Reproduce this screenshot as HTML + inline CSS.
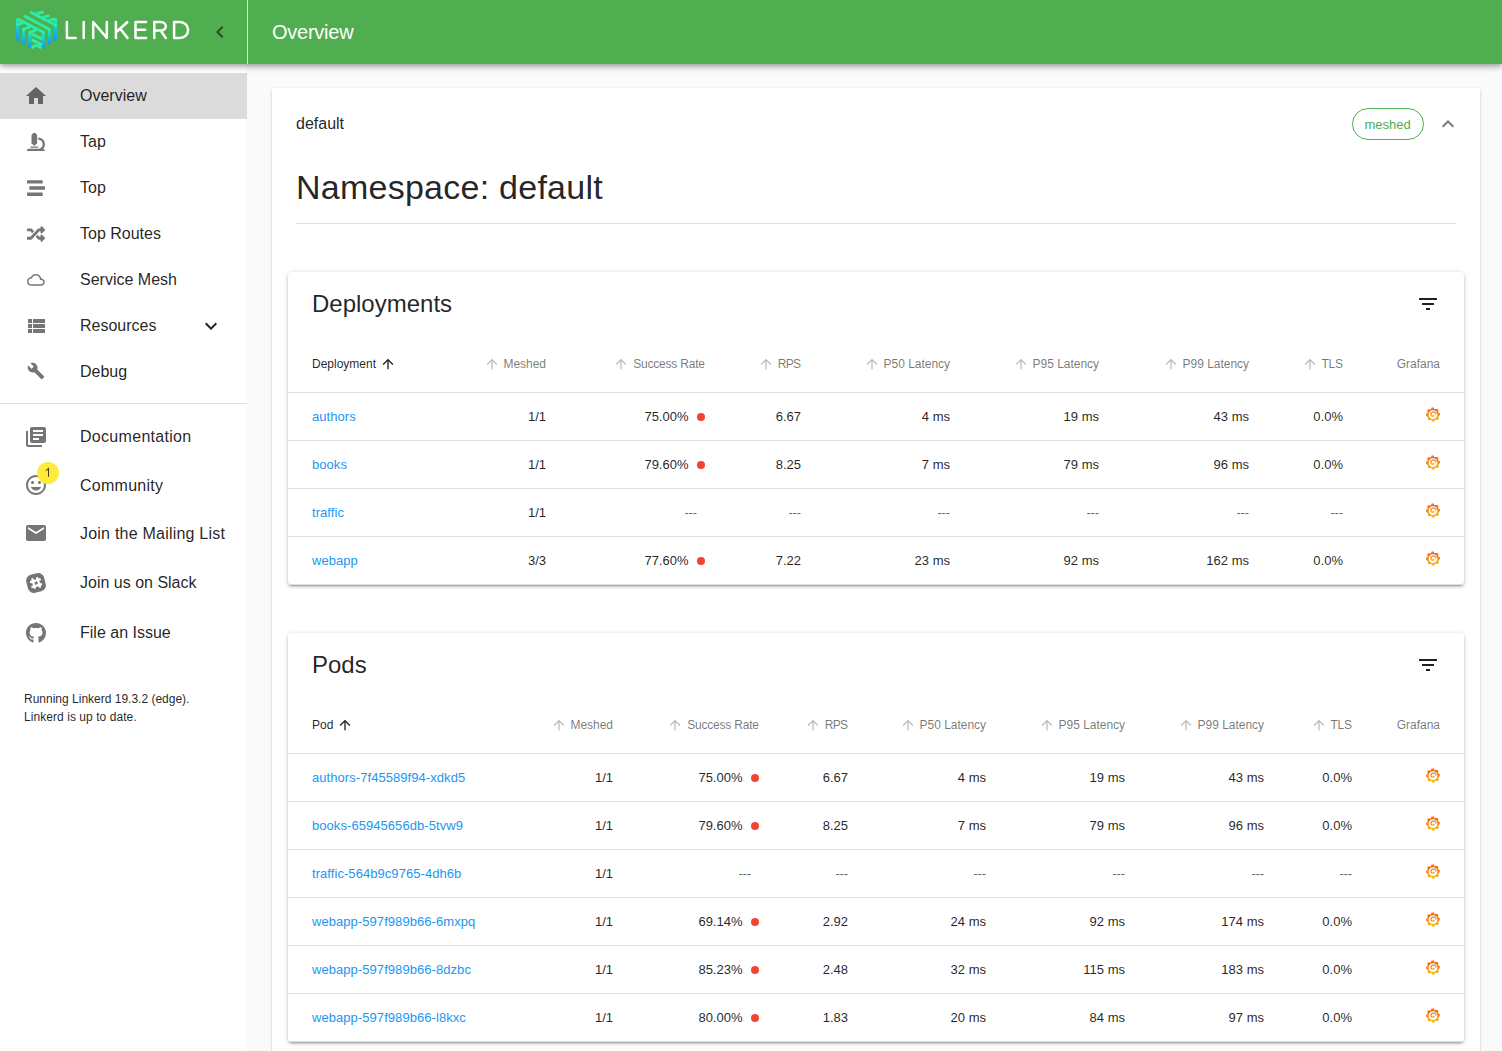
<!DOCTYPE html>
<html><head><meta charset="utf-8"><title>Linkerd</title>
<style>
html,body{margin:0;padding:0;}
body{width:1502px;height:1051px;overflow:hidden;position:relative;background:#fafafa;font-family:"Liberation Sans", sans-serif;}
.t{position:absolute;white-space:nowrap;}
svg{display:block;}
</style></head><body>

<div style="position:absolute;left:272px;top:88px;width:1208px;height:1100px;background:#fff;border-radius:2px;box-shadow:0px 1px 3px 0px rgba(0,0,0,0.2),0px 1px 1px 0px rgba(0,0,0,0.14),0px 2px 1px -1px rgba(0,0,0,0.12);"></div>
<div class="t" style="left:296px;top:116.46px;font-size:16px;line-height:16px;color:rgba(0,0,0,0.87);">default</div>
<div style="position:absolute;left:1352px;top:108px;width:72px;height:32px;box-sizing:border-box;border:1px solid #50ad50;border-radius:16px;"></div>
<div class="t" style="left:1364.5px;top:118.00px;font-size:13px;line-height:13px;color:#50ad50;">meshed</div>
<svg style="position:absolute;left:1436px;top:112px;" width="24" height="24" viewBox="0 0 24 24"><path fill="rgba(0,0,0,0.54)" d="M12 8l-6 6 1.41 1.41L12 10.83l4.59 4.58L18 14z"/></svg>
<div class="t" style="left:296px;top:170.02px;font-size:34px;line-height:34px;color:rgba(0,0,0,0.87);letter-spacing:0.25px;">Namespace: default</div>
<div style="position:absolute;left:296px;top:223px;width:1160px;height:1px;background:rgba(0,0,0,0.12);"></div>
<div style="position:absolute;left:288px;top:272px;width:1176px;height:313px;background:#fff;border-radius:4px;box-shadow:0px 1px 5px 0px rgba(0,0,0,0.2),0px 2px 2px 0px rgba(0,0,0,0.14),0px 3px 1px -2px rgba(0,0,0,0.12);"></div>
<div class="t" style="left:312px;top:291.68px;font-size:24px;line-height:24px;color:rgba(0,0,0,0.87);">Deployments</div>
<svg style="position:absolute;left:1416px;top:292px;" width="24" height="24" viewBox="0 0 24 24"><path fill="rgba(0,0,0,0.87)" d="M10 18h4v-2h-4v2zM3 6v2h18V6H3zm3 7h12v-2H6v2z"/></svg>
<div class="t" style="left:312px;top:357.84px;font-size:12px;line-height:12px;color:rgba(0,0,0,0.87);">Deployment</div>
<svg style="position:absolute;left:379.5px;top:356px;" width="16" height="16" viewBox="0 0 24 24"><path fill="rgba(0,0,0,0.87)" d="M4 12l1.41 1.41L11 7.83V20h2V7.83l5.58 5.59L20 12l-8-8-8 8z"/></svg>
<div class="t" style="right:956.0317708333333px;top:357.84px;font-size:12px;line-height:12px;color:rgba(0,0,0,0.54);text-align:right;letter-spacing:-0.032px;">Meshed</div>
<svg style="position:absolute;left:483.5px;top:356px;" width="16" height="16" viewBox="0 0 24 24"><path fill="rgba(0,0,0,0.26)" d="M4 12l1.41 1.41L11 7.83V20h2V7.83l5.58 5.59L20 12l-8-8-8 8z"/></svg>
<div class="t" style="right:797.202734375px;top:357.84px;font-size:12px;line-height:12px;color:rgba(0,0,0,0.54);text-align:right;letter-spacing:-0.203px;">Success Rate</div>
<svg style="position:absolute;left:613.4px;top:356px;" width="16" height="16" viewBox="0 0 24 24"><path fill="rgba(0,0,0,0.26)" d="M4 12l1.41 1.41L11 7.83V20h2V7.83l5.58 5.59L20 12l-8-8-8 8z"/></svg>
<div class="t" style="right:701.6583333333333px;top:357.84px;font-size:12px;line-height:12px;color:rgba(0,0,0,0.54);text-align:right;letter-spacing:-0.658px;">RPS</div>
<svg style="position:absolute;left:758.3px;top:356px;" width="16" height="16" viewBox="0 0 24 24"><path fill="rgba(0,0,0,0.26)" d="M4 12l1.41 1.41L11 7.83V20h2V7.83l5.58 5.59L20 12l-8-8-8 8z"/></svg>
<div class="t" style="right:552.0285511363636px;top:357.84px;font-size:12px;line-height:12px;color:rgba(0,0,0,0.54);text-align:right;letter-spacing:-0.029px;">P50 Latency</div>
<svg style="position:absolute;left:863.6px;top:356px;" width="16" height="16" viewBox="0 0 24 24"><path fill="rgba(0,0,0,0.26)" d="M4 12l1.41 1.41L11 7.83V20h2V7.83l5.58 5.59L20 12l-8-8-8 8z"/></svg>
<div class="t" style="right:403.0285511363636px;top:357.84px;font-size:12px;line-height:12px;color:rgba(0,0,0,0.54);text-align:right;letter-spacing:-0.029px;">P95 Latency</div>
<svg style="position:absolute;left:1012.5999999999999px;top:356px;" width="16" height="16" viewBox="0 0 24 24"><path fill="rgba(0,0,0,0.26)" d="M4 12l1.41 1.41L11 7.83V20h2V7.83l5.58 5.59L20 12l-8-8-8 8z"/></svg>
<div class="t" style="right:253.0285511363636px;top:357.84px;font-size:12px;line-height:12px;color:rgba(0,0,0,0.54);text-align:right;letter-spacing:-0.029px;">P99 Latency</div>
<svg style="position:absolute;left:1162.6px;top:356px;" width="16" height="16" viewBox="0 0 24 24"><path fill="rgba(0,0,0,0.26)" d="M4 12l1.41 1.41L11 7.83V20h2V7.83l5.58 5.59L20 12l-8-8-8 8z"/></svg>
<div class="t" style="right:159.2359375000001px;top:357.84px;font-size:12px;line-height:12px;color:rgba(0,0,0,0.54);text-align:right;letter-spacing:-0.236px;">TLS</div>
<svg style="position:absolute;left:1301.7px;top:356px;" width="16" height="16" viewBox="0 0 24 24"><path fill="rgba(0,0,0,0.26)" d="M4 12l1.41 1.41L11 7.83V20h2V7.83l5.58 5.59L20 12l-8-8-8 8z"/></svg>
<div class="t" style="right:61.99991071428576px;top:357.84px;font-size:12px;line-height:12px;color:rgba(0,0,0,0.54);text-align:right;letter-spacing:0.000px;">Grafana</div>
<div style="position:absolute;left:288px;top:392px;width:1176px;height:1px;background:#e0e0e0;"></div>
<div class="t" style="left:312px;top:410.00px;font-size:13px;line-height:13px;color:#2196f3;letter-spacing:0.06px;">authors</div>
<div class="t" style="right:956px;top:410.00px;font-size:13px;line-height:13px;color:rgba(0,0,0,0.87);text-align:right;">1/1</div>
<div class="t" style="right:813.5px;top:410.00px;font-size:13px;line-height:13px;color:rgba(0,0,0,0.87);text-align:right;">75.00%</div>
<div style="position:absolute;left:697px;top:413px;width:8px;height:8px;border-radius:50%;background:#f44336;"></div>
<div class="t" style="right:701px;top:410.00px;font-size:13px;line-height:13px;color:rgba(0,0,0,0.87);text-align:right;">6.67</div>
<div class="t" style="right:552px;top:410.00px;font-size:13px;line-height:13px;color:rgba(0,0,0,0.87);text-align:right;">4 ms</div>
<div class="t" style="right:403px;top:410.00px;font-size:13px;line-height:13px;color:rgba(0,0,0,0.87);text-align:right;">19 ms</div>
<div class="t" style="right:253px;top:410.00px;font-size:13px;line-height:13px;color:rgba(0,0,0,0.87);text-align:right;">43 ms</div>
<div class="t" style="right:159px;top:410.00px;font-size:13px;line-height:13px;color:rgba(0,0,0,0.87);text-align:right;">0.0%</div>
<svg style="position:absolute;left:1426px;top:407px;" width="14" height="16" viewBox="0 0 14 16"><defs><linearGradient id="gg1" x1="0" y1="0" x2="0" y2="16" gradientUnits="userSpaceOnUse"><stop offset="0" stop-color="#f05a28"/><stop offset="1" stop-color="#fbca0a"/></linearGradient></defs>
<path fill="url(#gg1)" fill-rule="evenodd" d="M14.1 7.6 L14.1 7.9 L14.1 8.2 L13.7 8.4 L13.2 8.6 L12.8 8.8 L12.7 9.0 L12.7 9.2 L12.6 9.4 L12.5 9.6 L12.5 9.9 L12.4 10.1 L12.3 10.3 L12.5 10.7 L12.7 11.1 L12.9 11.5 L12.7 11.8 L12.6 12.0 L12.4 12.2 L12.2 12.4 L12.0 12.6 L11.8 12.8 L11.6 13.0 L11.1 12.9 L10.7 12.7 L10.3 12.5 L10.1 12.6 L9.9 12.7 L9.7 12.9 L9.5 13.0 L9.3 13.1 L9.0 13.1 L8.8 13.2 L8.7 13.7 L8.6 14.1 L8.4 14.6 L8.1 14.6 L7.8 14.7 L7.6 14.7 L7.3 14.7 L7.0 14.7 L6.7 14.7 L6.4 14.7 L6.2 14.3 L6.0 13.8 L5.8 13.4 L5.6 13.3 L5.4 13.3 L5.2 13.2 L5.0 13.1 L4.7 13.1 L4.5 13.0 L4.3 12.9 L3.9 13.1 L3.5 13.3 L3.1 13.5 L2.8 13.3 L2.6 13.2 L2.4 13.0 L2.2 12.8 L2.0 12.6 L1.8 12.4 L1.6 12.2 L1.7 11.7 L1.9 11.3 L2.1 10.9 L2.0 10.7 L1.9 10.5 L1.7 10.3 L1.6 10.1 L1.5 9.9 L1.5 9.6 L1.4 9.4 L0.9 9.3 L0.5 9.2 L0.0 9.0 L-0.0 8.7 L-0.1 8.4 L-0.1 8.2 L-0.1 7.9 L-0.1 7.6 L-0.1 7.3 L-0.1 7.0 L0.3 6.8 L0.8 6.6 L1.2 6.4 L1.3 6.2 L1.3 6.0 L1.4 5.8 L1.5 5.6 L1.5 5.3 L1.6 5.1 L1.7 4.9 L1.5 4.5 L1.3 4.1 L1.1 3.7 L1.3 3.4 L1.4 3.2 L1.6 3.0 L1.8 2.8 L2.0 2.6 L2.2 2.4 L2.4 2.2 L2.9 2.3 L3.3 2.5 L3.7 2.7 L3.9 2.6 L4.1 2.5 L4.3 2.3 L4.5 2.2 L4.7 2.1 L5.0 2.1 L5.2 2.0 L5.3 1.5 L5.4 1.1 L5.6 0.6 L5.9 0.6 L6.2 0.5 L6.4 0.5 L6.7 0.5 L7.0 0.5 L7.3 0.5 L7.6 0.5 L7.8 0.9 L8.0 1.4 L8.2 1.8 L8.4 1.9 L8.6 1.9 L8.8 2.0 L9.0 2.1 L9.3 2.1 L9.5 2.2 L9.7 2.3 L10.1 2.1 L10.5 1.9 L10.9 1.7 L11.2 1.9 L11.4 2.0 L11.6 2.2 L11.8 2.4 L12.0 2.6 L12.2 2.8 L12.4 3.0 L12.3 3.5 L12.1 3.9 L11.9 4.3 L12.0 4.5 L12.1 4.7 L12.3 4.9 L12.4 5.1 L12.5 5.3 L12.5 5.6 L12.6 5.8 L13.1 5.9 L13.5 6.0 L14.0 6.2 L14.0 6.5 L14.1 6.8 L14.1 7.0 L14.1 7.3Z M11.3 7.6 A4.3 4.3 0 1 0 2.7 7.6 A4.3 4.3 0 1 0 11.3 7.6Z"/><path fill="none" stroke="url(#gg1)" stroke-width="1.25" stroke-linecap="round" d="M9.97 7.15 L9.84 6.77 L9.67 6.42 L9.45 6.10 L9.19 5.81 L8.91 5.57 L8.59 5.37 L8.26 5.21 L7.92 5.10 L7.57 5.05 L7.22 5.03 L6.88 5.07 L6.55 5.15 L6.24 5.27 L5.96 5.43 L5.70 5.63 L5.48 5.85 L5.29 6.10 L5.14 6.36 L5.03 6.64 L4.96 6.92 L4.93 7.21 L4.94 7.49 L4.98 7.76 L5.06 8.02 L5.18 8.26 L5.32 8.47 L5.49 8.67 L5.67 8.83 L5.87 8.96 L6.09 9.06 L6.31 9.13 L6.53 9.17 L6.75 9.18 L6.96 9.15 L7.17 9.10 L7.36 9.03 L7.53 8.93 L7.68 8.81 L7.81 8.67 L7.91 8.53"/></svg>
<div style="position:absolute;left:288px;top:440px;width:1176px;height:1px;background:#e0e0e0;"></div>
<div class="t" style="left:312px;top:458.00px;font-size:13px;line-height:13px;color:#2196f3;letter-spacing:0.06px;">books</div>
<div class="t" style="right:956px;top:458.00px;font-size:13px;line-height:13px;color:rgba(0,0,0,0.87);text-align:right;">1/1</div>
<div class="t" style="right:813.5px;top:458.00px;font-size:13px;line-height:13px;color:rgba(0,0,0,0.87);text-align:right;">79.60%</div>
<div style="position:absolute;left:697px;top:461px;width:8px;height:8px;border-radius:50%;background:#f44336;"></div>
<div class="t" style="right:701px;top:458.00px;font-size:13px;line-height:13px;color:rgba(0,0,0,0.87);text-align:right;">8.25</div>
<div class="t" style="right:552px;top:458.00px;font-size:13px;line-height:13px;color:rgba(0,0,0,0.87);text-align:right;">7 ms</div>
<div class="t" style="right:403px;top:458.00px;font-size:13px;line-height:13px;color:rgba(0,0,0,0.87);text-align:right;">79 ms</div>
<div class="t" style="right:253px;top:458.00px;font-size:13px;line-height:13px;color:rgba(0,0,0,0.87);text-align:right;">96 ms</div>
<div class="t" style="right:159px;top:458.00px;font-size:13px;line-height:13px;color:rgba(0,0,0,0.87);text-align:right;">0.0%</div>
<svg style="position:absolute;left:1426px;top:455px;" width="14" height="16" viewBox="0 0 14 16"><defs><linearGradient id="gg2" x1="0" y1="0" x2="0" y2="16" gradientUnits="userSpaceOnUse"><stop offset="0" stop-color="#f05a28"/><stop offset="1" stop-color="#fbca0a"/></linearGradient></defs>
<path fill="url(#gg2)" fill-rule="evenodd" d="M14.1 7.6 L14.1 7.9 L14.1 8.2 L13.7 8.4 L13.2 8.6 L12.8 8.8 L12.7 9.0 L12.7 9.2 L12.6 9.4 L12.5 9.6 L12.5 9.9 L12.4 10.1 L12.3 10.3 L12.5 10.7 L12.7 11.1 L12.9 11.5 L12.7 11.8 L12.6 12.0 L12.4 12.2 L12.2 12.4 L12.0 12.6 L11.8 12.8 L11.6 13.0 L11.1 12.9 L10.7 12.7 L10.3 12.5 L10.1 12.6 L9.9 12.7 L9.7 12.9 L9.5 13.0 L9.3 13.1 L9.0 13.1 L8.8 13.2 L8.7 13.7 L8.6 14.1 L8.4 14.6 L8.1 14.6 L7.8 14.7 L7.6 14.7 L7.3 14.7 L7.0 14.7 L6.7 14.7 L6.4 14.7 L6.2 14.3 L6.0 13.8 L5.8 13.4 L5.6 13.3 L5.4 13.3 L5.2 13.2 L5.0 13.1 L4.7 13.1 L4.5 13.0 L4.3 12.9 L3.9 13.1 L3.5 13.3 L3.1 13.5 L2.8 13.3 L2.6 13.2 L2.4 13.0 L2.2 12.8 L2.0 12.6 L1.8 12.4 L1.6 12.2 L1.7 11.7 L1.9 11.3 L2.1 10.9 L2.0 10.7 L1.9 10.5 L1.7 10.3 L1.6 10.1 L1.5 9.9 L1.5 9.6 L1.4 9.4 L0.9 9.3 L0.5 9.2 L0.0 9.0 L-0.0 8.7 L-0.1 8.4 L-0.1 8.2 L-0.1 7.9 L-0.1 7.6 L-0.1 7.3 L-0.1 7.0 L0.3 6.8 L0.8 6.6 L1.2 6.4 L1.3 6.2 L1.3 6.0 L1.4 5.8 L1.5 5.6 L1.5 5.3 L1.6 5.1 L1.7 4.9 L1.5 4.5 L1.3 4.1 L1.1 3.7 L1.3 3.4 L1.4 3.2 L1.6 3.0 L1.8 2.8 L2.0 2.6 L2.2 2.4 L2.4 2.2 L2.9 2.3 L3.3 2.5 L3.7 2.7 L3.9 2.6 L4.1 2.5 L4.3 2.3 L4.5 2.2 L4.7 2.1 L5.0 2.1 L5.2 2.0 L5.3 1.5 L5.4 1.1 L5.6 0.6 L5.9 0.6 L6.2 0.5 L6.4 0.5 L6.7 0.5 L7.0 0.5 L7.3 0.5 L7.6 0.5 L7.8 0.9 L8.0 1.4 L8.2 1.8 L8.4 1.9 L8.6 1.9 L8.8 2.0 L9.0 2.1 L9.3 2.1 L9.5 2.2 L9.7 2.3 L10.1 2.1 L10.5 1.9 L10.9 1.7 L11.2 1.9 L11.4 2.0 L11.6 2.2 L11.8 2.4 L12.0 2.6 L12.2 2.8 L12.4 3.0 L12.3 3.5 L12.1 3.9 L11.9 4.3 L12.0 4.5 L12.1 4.7 L12.3 4.9 L12.4 5.1 L12.5 5.3 L12.5 5.6 L12.6 5.8 L13.1 5.9 L13.5 6.0 L14.0 6.2 L14.0 6.5 L14.1 6.8 L14.1 7.0 L14.1 7.3Z M11.3 7.6 A4.3 4.3 0 1 0 2.7 7.6 A4.3 4.3 0 1 0 11.3 7.6Z"/><path fill="none" stroke="url(#gg2)" stroke-width="1.25" stroke-linecap="round" d="M9.97 7.15 L9.84 6.77 L9.67 6.42 L9.45 6.10 L9.19 5.81 L8.91 5.57 L8.59 5.37 L8.26 5.21 L7.92 5.10 L7.57 5.05 L7.22 5.03 L6.88 5.07 L6.55 5.15 L6.24 5.27 L5.96 5.43 L5.70 5.63 L5.48 5.85 L5.29 6.10 L5.14 6.36 L5.03 6.64 L4.96 6.92 L4.93 7.21 L4.94 7.49 L4.98 7.76 L5.06 8.02 L5.18 8.26 L5.32 8.47 L5.49 8.67 L5.67 8.83 L5.87 8.96 L6.09 9.06 L6.31 9.13 L6.53 9.17 L6.75 9.18 L6.96 9.15 L7.17 9.10 L7.36 9.03 L7.53 8.93 L7.68 8.81 L7.81 8.67 L7.91 8.53"/></svg>
<div style="position:absolute;left:288px;top:488px;width:1176px;height:1px;background:#e0e0e0;"></div>
<div class="t" style="left:312px;top:506.00px;font-size:13px;line-height:13px;color:#2196f3;letter-spacing:0.06px;">traffic</div>
<div class="t" style="right:956px;top:506.00px;font-size:13px;line-height:13px;color:rgba(0,0,0,0.87);text-align:right;">1/1</div>
<div class="t" style="right:805.2px;top:506.00px;font-size:13px;line-height:13px;color:rgba(0,0,0,0.62);text-align:right;letter-spacing:-0.2px;">---</div>
<div class="t" style="right:701.2px;top:506.00px;font-size:13px;line-height:13px;color:rgba(0,0,0,0.62);text-align:right;letter-spacing:-0.2px;">---</div>
<div class="t" style="right:552.2px;top:506.00px;font-size:13px;line-height:13px;color:rgba(0,0,0,0.62);text-align:right;letter-spacing:-0.2px;">---</div>
<div class="t" style="right:403.20000000000005px;top:506.00px;font-size:13px;line-height:13px;color:rgba(0,0,0,0.62);text-align:right;letter-spacing:-0.2px;">---</div>
<div class="t" style="right:253.20000000000005px;top:506.00px;font-size:13px;line-height:13px;color:rgba(0,0,0,0.62);text-align:right;letter-spacing:-0.2px;">---</div>
<div class="t" style="right:159.20000000000005px;top:506.00px;font-size:13px;line-height:13px;color:rgba(0,0,0,0.62);text-align:right;letter-spacing:-0.2px;">---</div>
<svg style="position:absolute;left:1426px;top:503px;" width="14" height="16" viewBox="0 0 14 16"><defs><linearGradient id="gg3" x1="0" y1="0" x2="0" y2="16" gradientUnits="userSpaceOnUse"><stop offset="0" stop-color="#f05a28"/><stop offset="1" stop-color="#fbca0a"/></linearGradient></defs>
<path fill="url(#gg3)" fill-rule="evenodd" d="M14.1 7.6 L14.1 7.9 L14.1 8.2 L13.7 8.4 L13.2 8.6 L12.8 8.8 L12.7 9.0 L12.7 9.2 L12.6 9.4 L12.5 9.6 L12.5 9.9 L12.4 10.1 L12.3 10.3 L12.5 10.7 L12.7 11.1 L12.9 11.5 L12.7 11.8 L12.6 12.0 L12.4 12.2 L12.2 12.4 L12.0 12.6 L11.8 12.8 L11.6 13.0 L11.1 12.9 L10.7 12.7 L10.3 12.5 L10.1 12.6 L9.9 12.7 L9.7 12.9 L9.5 13.0 L9.3 13.1 L9.0 13.1 L8.8 13.2 L8.7 13.7 L8.6 14.1 L8.4 14.6 L8.1 14.6 L7.8 14.7 L7.6 14.7 L7.3 14.7 L7.0 14.7 L6.7 14.7 L6.4 14.7 L6.2 14.3 L6.0 13.8 L5.8 13.4 L5.6 13.3 L5.4 13.3 L5.2 13.2 L5.0 13.1 L4.7 13.1 L4.5 13.0 L4.3 12.9 L3.9 13.1 L3.5 13.3 L3.1 13.5 L2.8 13.3 L2.6 13.2 L2.4 13.0 L2.2 12.8 L2.0 12.6 L1.8 12.4 L1.6 12.2 L1.7 11.7 L1.9 11.3 L2.1 10.9 L2.0 10.7 L1.9 10.5 L1.7 10.3 L1.6 10.1 L1.5 9.9 L1.5 9.6 L1.4 9.4 L0.9 9.3 L0.5 9.2 L0.0 9.0 L-0.0 8.7 L-0.1 8.4 L-0.1 8.2 L-0.1 7.9 L-0.1 7.6 L-0.1 7.3 L-0.1 7.0 L0.3 6.8 L0.8 6.6 L1.2 6.4 L1.3 6.2 L1.3 6.0 L1.4 5.8 L1.5 5.6 L1.5 5.3 L1.6 5.1 L1.7 4.9 L1.5 4.5 L1.3 4.1 L1.1 3.7 L1.3 3.4 L1.4 3.2 L1.6 3.0 L1.8 2.8 L2.0 2.6 L2.2 2.4 L2.4 2.2 L2.9 2.3 L3.3 2.5 L3.7 2.7 L3.9 2.6 L4.1 2.5 L4.3 2.3 L4.5 2.2 L4.7 2.1 L5.0 2.1 L5.2 2.0 L5.3 1.5 L5.4 1.1 L5.6 0.6 L5.9 0.6 L6.2 0.5 L6.4 0.5 L6.7 0.5 L7.0 0.5 L7.3 0.5 L7.6 0.5 L7.8 0.9 L8.0 1.4 L8.2 1.8 L8.4 1.9 L8.6 1.9 L8.8 2.0 L9.0 2.1 L9.3 2.1 L9.5 2.2 L9.7 2.3 L10.1 2.1 L10.5 1.9 L10.9 1.7 L11.2 1.9 L11.4 2.0 L11.6 2.2 L11.8 2.4 L12.0 2.6 L12.2 2.8 L12.4 3.0 L12.3 3.5 L12.1 3.9 L11.9 4.3 L12.0 4.5 L12.1 4.7 L12.3 4.9 L12.4 5.1 L12.5 5.3 L12.5 5.6 L12.6 5.8 L13.1 5.9 L13.5 6.0 L14.0 6.2 L14.0 6.5 L14.1 6.8 L14.1 7.0 L14.1 7.3Z M11.3 7.6 A4.3 4.3 0 1 0 2.7 7.6 A4.3 4.3 0 1 0 11.3 7.6Z"/><path fill="none" stroke="url(#gg3)" stroke-width="1.25" stroke-linecap="round" d="M9.97 7.15 L9.84 6.77 L9.67 6.42 L9.45 6.10 L9.19 5.81 L8.91 5.57 L8.59 5.37 L8.26 5.21 L7.92 5.10 L7.57 5.05 L7.22 5.03 L6.88 5.07 L6.55 5.15 L6.24 5.27 L5.96 5.43 L5.70 5.63 L5.48 5.85 L5.29 6.10 L5.14 6.36 L5.03 6.64 L4.96 6.92 L4.93 7.21 L4.94 7.49 L4.98 7.76 L5.06 8.02 L5.18 8.26 L5.32 8.47 L5.49 8.67 L5.67 8.83 L5.87 8.96 L6.09 9.06 L6.31 9.13 L6.53 9.17 L6.75 9.18 L6.96 9.15 L7.17 9.10 L7.36 9.03 L7.53 8.93 L7.68 8.81 L7.81 8.67 L7.91 8.53"/></svg>
<div style="position:absolute;left:288px;top:536px;width:1176px;height:1px;background:#e0e0e0;"></div>
<div class="t" style="left:312px;top:554.00px;font-size:13px;line-height:13px;color:#2196f3;letter-spacing:0.06px;">webapp</div>
<div class="t" style="right:956px;top:554.00px;font-size:13px;line-height:13px;color:rgba(0,0,0,0.87);text-align:right;">3/3</div>
<div class="t" style="right:813.5px;top:554.00px;font-size:13px;line-height:13px;color:rgba(0,0,0,0.87);text-align:right;">77.60%</div>
<div style="position:absolute;left:697px;top:557px;width:8px;height:8px;border-radius:50%;background:#f44336;"></div>
<div class="t" style="right:701px;top:554.00px;font-size:13px;line-height:13px;color:rgba(0,0,0,0.87);text-align:right;">7.22</div>
<div class="t" style="right:552px;top:554.00px;font-size:13px;line-height:13px;color:rgba(0,0,0,0.87);text-align:right;">23 ms</div>
<div class="t" style="right:403px;top:554.00px;font-size:13px;line-height:13px;color:rgba(0,0,0,0.87);text-align:right;">92 ms</div>
<div class="t" style="right:253px;top:554.00px;font-size:13px;line-height:13px;color:rgba(0,0,0,0.87);text-align:right;">162 ms</div>
<div class="t" style="right:159px;top:554.00px;font-size:13px;line-height:13px;color:rgba(0,0,0,0.87);text-align:right;">0.0%</div>
<svg style="position:absolute;left:1426px;top:551px;" width="14" height="16" viewBox="0 0 14 16"><defs><linearGradient id="gg4" x1="0" y1="0" x2="0" y2="16" gradientUnits="userSpaceOnUse"><stop offset="0" stop-color="#f05a28"/><stop offset="1" stop-color="#fbca0a"/></linearGradient></defs>
<path fill="url(#gg4)" fill-rule="evenodd" d="M14.1 7.6 L14.1 7.9 L14.1 8.2 L13.7 8.4 L13.2 8.6 L12.8 8.8 L12.7 9.0 L12.7 9.2 L12.6 9.4 L12.5 9.6 L12.5 9.9 L12.4 10.1 L12.3 10.3 L12.5 10.7 L12.7 11.1 L12.9 11.5 L12.7 11.8 L12.6 12.0 L12.4 12.2 L12.2 12.4 L12.0 12.6 L11.8 12.8 L11.6 13.0 L11.1 12.9 L10.7 12.7 L10.3 12.5 L10.1 12.6 L9.9 12.7 L9.7 12.9 L9.5 13.0 L9.3 13.1 L9.0 13.1 L8.8 13.2 L8.7 13.7 L8.6 14.1 L8.4 14.6 L8.1 14.6 L7.8 14.7 L7.6 14.7 L7.3 14.7 L7.0 14.7 L6.7 14.7 L6.4 14.7 L6.2 14.3 L6.0 13.8 L5.8 13.4 L5.6 13.3 L5.4 13.3 L5.2 13.2 L5.0 13.1 L4.7 13.1 L4.5 13.0 L4.3 12.9 L3.9 13.1 L3.5 13.3 L3.1 13.5 L2.8 13.3 L2.6 13.2 L2.4 13.0 L2.2 12.8 L2.0 12.6 L1.8 12.4 L1.6 12.2 L1.7 11.7 L1.9 11.3 L2.1 10.9 L2.0 10.7 L1.9 10.5 L1.7 10.3 L1.6 10.1 L1.5 9.9 L1.5 9.6 L1.4 9.4 L0.9 9.3 L0.5 9.2 L0.0 9.0 L-0.0 8.7 L-0.1 8.4 L-0.1 8.2 L-0.1 7.9 L-0.1 7.6 L-0.1 7.3 L-0.1 7.0 L0.3 6.8 L0.8 6.6 L1.2 6.4 L1.3 6.2 L1.3 6.0 L1.4 5.8 L1.5 5.6 L1.5 5.3 L1.6 5.1 L1.7 4.9 L1.5 4.5 L1.3 4.1 L1.1 3.7 L1.3 3.4 L1.4 3.2 L1.6 3.0 L1.8 2.8 L2.0 2.6 L2.2 2.4 L2.4 2.2 L2.9 2.3 L3.3 2.5 L3.7 2.7 L3.9 2.6 L4.1 2.5 L4.3 2.3 L4.5 2.2 L4.7 2.1 L5.0 2.1 L5.2 2.0 L5.3 1.5 L5.4 1.1 L5.6 0.6 L5.9 0.6 L6.2 0.5 L6.4 0.5 L6.7 0.5 L7.0 0.5 L7.3 0.5 L7.6 0.5 L7.8 0.9 L8.0 1.4 L8.2 1.8 L8.4 1.9 L8.6 1.9 L8.8 2.0 L9.0 2.1 L9.3 2.1 L9.5 2.2 L9.7 2.3 L10.1 2.1 L10.5 1.9 L10.9 1.7 L11.2 1.9 L11.4 2.0 L11.6 2.2 L11.8 2.4 L12.0 2.6 L12.2 2.8 L12.4 3.0 L12.3 3.5 L12.1 3.9 L11.9 4.3 L12.0 4.5 L12.1 4.7 L12.3 4.9 L12.4 5.1 L12.5 5.3 L12.5 5.6 L12.6 5.8 L13.1 5.9 L13.5 6.0 L14.0 6.2 L14.0 6.5 L14.1 6.8 L14.1 7.0 L14.1 7.3Z M11.3 7.6 A4.3 4.3 0 1 0 2.7 7.6 A4.3 4.3 0 1 0 11.3 7.6Z"/><path fill="none" stroke="url(#gg4)" stroke-width="1.25" stroke-linecap="round" d="M9.97 7.15 L9.84 6.77 L9.67 6.42 L9.45 6.10 L9.19 5.81 L8.91 5.57 L8.59 5.37 L8.26 5.21 L7.92 5.10 L7.57 5.05 L7.22 5.03 L6.88 5.07 L6.55 5.15 L6.24 5.27 L5.96 5.43 L5.70 5.63 L5.48 5.85 L5.29 6.10 L5.14 6.36 L5.03 6.64 L4.96 6.92 L4.93 7.21 L4.94 7.49 L4.98 7.76 L5.06 8.02 L5.18 8.26 L5.32 8.47 L5.49 8.67 L5.67 8.83 L5.87 8.96 L6.09 9.06 L6.31 9.13 L6.53 9.17 L6.75 9.18 L6.96 9.15 L7.17 9.10 L7.36 9.03 L7.53 8.93 L7.68 8.81 L7.81 8.67 L7.91 8.53"/></svg>
<div style="position:absolute;left:288px;top:584px;width:1176px;height:1px;background:#e0e0e0;"></div>
<div style="position:absolute;left:288px;top:633px;width:1176px;height:409px;background:#fff;border-radius:4px;box-shadow:0px 1px 5px 0px rgba(0,0,0,0.2),0px 2px 2px 0px rgba(0,0,0,0.14),0px 3px 1px -2px rgba(0,0,0,0.12);"></div>
<div class="t" style="left:312px;top:652.68px;font-size:24px;line-height:24px;color:rgba(0,0,0,0.87);">Pods</div>
<svg style="position:absolute;left:1416px;top:653px;" width="24" height="24" viewBox="0 0 24 24"><path fill="rgba(0,0,0,0.87)" d="M10 18h4v-2h-4v2zM3 6v2h18V6H3zm3 7h12v-2H6v2z"/></svg>
<div class="t" style="left:312px;top:718.84px;font-size:12px;line-height:12px;color:rgba(0,0,0,0.87);">Pod</div>
<svg style="position:absolute;left:336.5px;top:717px;" width="16" height="16" viewBox="0 0 24 24"><path fill="rgba(0,0,0,0.87)" d="M4 12l1.41 1.41L11 7.83V20h2V7.83l5.58 5.59L20 12l-8-8-8 8z"/></svg>
<div class="t" style="right:889.0317708333333px;top:718.84px;font-size:12px;line-height:12px;color:rgba(0,0,0,0.54);text-align:right;letter-spacing:-0.032px;">Meshed</div>
<svg style="position:absolute;left:550.5px;top:717px;" width="16" height="16" viewBox="0 0 24 24"><path fill="rgba(0,0,0,0.26)" d="M4 12l1.41 1.41L11 7.83V20h2V7.83l5.58 5.59L20 12l-8-8-8 8z"/></svg>
<div class="t" style="right:743.202734375px;top:718.84px;font-size:12px;line-height:12px;color:rgba(0,0,0,0.54);text-align:right;letter-spacing:-0.203px;">Success Rate</div>
<svg style="position:absolute;left:667.4px;top:717px;" width="16" height="16" viewBox="0 0 24 24"><path fill="rgba(0,0,0,0.26)" d="M4 12l1.41 1.41L11 7.83V20h2V7.83l5.58 5.59L20 12l-8-8-8 8z"/></svg>
<div class="t" style="right:654.6583333333333px;top:718.84px;font-size:12px;line-height:12px;color:rgba(0,0,0,0.54);text-align:right;letter-spacing:-0.658px;">RPS</div>
<svg style="position:absolute;left:805.3px;top:717px;" width="16" height="16" viewBox="0 0 24 24"><path fill="rgba(0,0,0,0.26)" d="M4 12l1.41 1.41L11 7.83V20h2V7.83l5.58 5.59L20 12l-8-8-8 8z"/></svg>
<div class="t" style="right:516.0285511363636px;top:718.84px;font-size:12px;line-height:12px;color:rgba(0,0,0,0.54);text-align:right;letter-spacing:-0.029px;">P50 Latency</div>
<svg style="position:absolute;left:899.6px;top:717px;" width="16" height="16" viewBox="0 0 24 24"><path fill="rgba(0,0,0,0.26)" d="M4 12l1.41 1.41L11 7.83V20h2V7.83l5.58 5.59L20 12l-8-8-8 8z"/></svg>
<div class="t" style="right:377.0285511363636px;top:718.84px;font-size:12px;line-height:12px;color:rgba(0,0,0,0.54);text-align:right;letter-spacing:-0.029px;">P95 Latency</div>
<svg style="position:absolute;left:1038.6px;top:717px;" width="16" height="16" viewBox="0 0 24 24"><path fill="rgba(0,0,0,0.26)" d="M4 12l1.41 1.41L11 7.83V20h2V7.83l5.58 5.59L20 12l-8-8-8 8z"/></svg>
<div class="t" style="right:238.0285511363636px;top:718.84px;font-size:12px;line-height:12px;color:rgba(0,0,0,0.54);text-align:right;letter-spacing:-0.029px;">P99 Latency</div>
<svg style="position:absolute;left:1177.6px;top:717px;" width="16" height="16" viewBox="0 0 24 24"><path fill="rgba(0,0,0,0.26)" d="M4 12l1.41 1.41L11 7.83V20h2V7.83l5.58 5.59L20 12l-8-8-8 8z"/></svg>
<div class="t" style="right:150.2359375000001px;top:718.84px;font-size:12px;line-height:12px;color:rgba(0,0,0,0.54);text-align:right;letter-spacing:-0.236px;">TLS</div>
<svg style="position:absolute;left:1310.7px;top:717px;" width="16" height="16" viewBox="0 0 24 24"><path fill="rgba(0,0,0,0.26)" d="M4 12l1.41 1.41L11 7.83V20h2V7.83l5.58 5.59L20 12l-8-8-8 8z"/></svg>
<div class="t" style="right:61.99991071428576px;top:718.84px;font-size:12px;line-height:12px;color:rgba(0,0,0,0.54);text-align:right;letter-spacing:0.000px;">Grafana</div>
<div style="position:absolute;left:288px;top:753px;width:1176px;height:1px;background:#e0e0e0;"></div>
<div class="t" style="left:312px;top:771.00px;font-size:13px;line-height:13px;color:#2196f3;letter-spacing:0.06px;">authors-7f45589f94-xdkd5</div>
<div class="t" style="right:889px;top:771.00px;font-size:13px;line-height:13px;color:rgba(0,0,0,0.87);text-align:right;">1/1</div>
<div class="t" style="right:759.5px;top:771.00px;font-size:13px;line-height:13px;color:rgba(0,0,0,0.87);text-align:right;">75.00%</div>
<div style="position:absolute;left:751px;top:774px;width:8px;height:8px;border-radius:50%;background:#f44336;"></div>
<div class="t" style="right:654px;top:771.00px;font-size:13px;line-height:13px;color:rgba(0,0,0,0.87);text-align:right;">6.67</div>
<div class="t" style="right:516px;top:771.00px;font-size:13px;line-height:13px;color:rgba(0,0,0,0.87);text-align:right;">4 ms</div>
<div class="t" style="right:377px;top:771.00px;font-size:13px;line-height:13px;color:rgba(0,0,0,0.87);text-align:right;">19 ms</div>
<div class="t" style="right:238px;top:771.00px;font-size:13px;line-height:13px;color:rgba(0,0,0,0.87);text-align:right;">43 ms</div>
<div class="t" style="right:150px;top:771.00px;font-size:13px;line-height:13px;color:rgba(0,0,0,0.87);text-align:right;">0.0%</div>
<svg style="position:absolute;left:1426px;top:768px;" width="14" height="16" viewBox="0 0 14 16"><defs><linearGradient id="gg5" x1="0" y1="0" x2="0" y2="16" gradientUnits="userSpaceOnUse"><stop offset="0" stop-color="#f05a28"/><stop offset="1" stop-color="#fbca0a"/></linearGradient></defs>
<path fill="url(#gg5)" fill-rule="evenodd" d="M14.1 7.6 L14.1 7.9 L14.1 8.2 L13.7 8.4 L13.2 8.6 L12.8 8.8 L12.7 9.0 L12.7 9.2 L12.6 9.4 L12.5 9.6 L12.5 9.9 L12.4 10.1 L12.3 10.3 L12.5 10.7 L12.7 11.1 L12.9 11.5 L12.7 11.8 L12.6 12.0 L12.4 12.2 L12.2 12.4 L12.0 12.6 L11.8 12.8 L11.6 13.0 L11.1 12.9 L10.7 12.7 L10.3 12.5 L10.1 12.6 L9.9 12.7 L9.7 12.9 L9.5 13.0 L9.3 13.1 L9.0 13.1 L8.8 13.2 L8.7 13.7 L8.6 14.1 L8.4 14.6 L8.1 14.6 L7.8 14.7 L7.6 14.7 L7.3 14.7 L7.0 14.7 L6.7 14.7 L6.4 14.7 L6.2 14.3 L6.0 13.8 L5.8 13.4 L5.6 13.3 L5.4 13.3 L5.2 13.2 L5.0 13.1 L4.7 13.1 L4.5 13.0 L4.3 12.9 L3.9 13.1 L3.5 13.3 L3.1 13.5 L2.8 13.3 L2.6 13.2 L2.4 13.0 L2.2 12.8 L2.0 12.6 L1.8 12.4 L1.6 12.2 L1.7 11.7 L1.9 11.3 L2.1 10.9 L2.0 10.7 L1.9 10.5 L1.7 10.3 L1.6 10.1 L1.5 9.9 L1.5 9.6 L1.4 9.4 L0.9 9.3 L0.5 9.2 L0.0 9.0 L-0.0 8.7 L-0.1 8.4 L-0.1 8.2 L-0.1 7.9 L-0.1 7.6 L-0.1 7.3 L-0.1 7.0 L0.3 6.8 L0.8 6.6 L1.2 6.4 L1.3 6.2 L1.3 6.0 L1.4 5.8 L1.5 5.6 L1.5 5.3 L1.6 5.1 L1.7 4.9 L1.5 4.5 L1.3 4.1 L1.1 3.7 L1.3 3.4 L1.4 3.2 L1.6 3.0 L1.8 2.8 L2.0 2.6 L2.2 2.4 L2.4 2.2 L2.9 2.3 L3.3 2.5 L3.7 2.7 L3.9 2.6 L4.1 2.5 L4.3 2.3 L4.5 2.2 L4.7 2.1 L5.0 2.1 L5.2 2.0 L5.3 1.5 L5.4 1.1 L5.6 0.6 L5.9 0.6 L6.2 0.5 L6.4 0.5 L6.7 0.5 L7.0 0.5 L7.3 0.5 L7.6 0.5 L7.8 0.9 L8.0 1.4 L8.2 1.8 L8.4 1.9 L8.6 1.9 L8.8 2.0 L9.0 2.1 L9.3 2.1 L9.5 2.2 L9.7 2.3 L10.1 2.1 L10.5 1.9 L10.9 1.7 L11.2 1.9 L11.4 2.0 L11.6 2.2 L11.8 2.4 L12.0 2.6 L12.2 2.8 L12.4 3.0 L12.3 3.5 L12.1 3.9 L11.9 4.3 L12.0 4.5 L12.1 4.7 L12.3 4.9 L12.4 5.1 L12.5 5.3 L12.5 5.6 L12.6 5.8 L13.1 5.9 L13.5 6.0 L14.0 6.2 L14.0 6.5 L14.1 6.8 L14.1 7.0 L14.1 7.3Z M11.3 7.6 A4.3 4.3 0 1 0 2.7 7.6 A4.3 4.3 0 1 0 11.3 7.6Z"/><path fill="none" stroke="url(#gg5)" stroke-width="1.25" stroke-linecap="round" d="M9.97 7.15 L9.84 6.77 L9.67 6.42 L9.45 6.10 L9.19 5.81 L8.91 5.57 L8.59 5.37 L8.26 5.21 L7.92 5.10 L7.57 5.05 L7.22 5.03 L6.88 5.07 L6.55 5.15 L6.24 5.27 L5.96 5.43 L5.70 5.63 L5.48 5.85 L5.29 6.10 L5.14 6.36 L5.03 6.64 L4.96 6.92 L4.93 7.21 L4.94 7.49 L4.98 7.76 L5.06 8.02 L5.18 8.26 L5.32 8.47 L5.49 8.67 L5.67 8.83 L5.87 8.96 L6.09 9.06 L6.31 9.13 L6.53 9.17 L6.75 9.18 L6.96 9.15 L7.17 9.10 L7.36 9.03 L7.53 8.93 L7.68 8.81 L7.81 8.67 L7.91 8.53"/></svg>
<div style="position:absolute;left:288px;top:801px;width:1176px;height:1px;background:#e0e0e0;"></div>
<div class="t" style="left:312px;top:819.00px;font-size:13px;line-height:13px;color:#2196f3;letter-spacing:0.06px;">books-65945656db-5tvw9</div>
<div class="t" style="right:889px;top:819.00px;font-size:13px;line-height:13px;color:rgba(0,0,0,0.87);text-align:right;">1/1</div>
<div class="t" style="right:759.5px;top:819.00px;font-size:13px;line-height:13px;color:rgba(0,0,0,0.87);text-align:right;">79.60%</div>
<div style="position:absolute;left:751px;top:822px;width:8px;height:8px;border-radius:50%;background:#f44336;"></div>
<div class="t" style="right:654px;top:819.00px;font-size:13px;line-height:13px;color:rgba(0,0,0,0.87);text-align:right;">8.25</div>
<div class="t" style="right:516px;top:819.00px;font-size:13px;line-height:13px;color:rgba(0,0,0,0.87);text-align:right;">7 ms</div>
<div class="t" style="right:377px;top:819.00px;font-size:13px;line-height:13px;color:rgba(0,0,0,0.87);text-align:right;">79 ms</div>
<div class="t" style="right:238px;top:819.00px;font-size:13px;line-height:13px;color:rgba(0,0,0,0.87);text-align:right;">96 ms</div>
<div class="t" style="right:150px;top:819.00px;font-size:13px;line-height:13px;color:rgba(0,0,0,0.87);text-align:right;">0.0%</div>
<svg style="position:absolute;left:1426px;top:816px;" width="14" height="16" viewBox="0 0 14 16"><defs><linearGradient id="gg6" x1="0" y1="0" x2="0" y2="16" gradientUnits="userSpaceOnUse"><stop offset="0" stop-color="#f05a28"/><stop offset="1" stop-color="#fbca0a"/></linearGradient></defs>
<path fill="url(#gg6)" fill-rule="evenodd" d="M14.1 7.6 L14.1 7.9 L14.1 8.2 L13.7 8.4 L13.2 8.6 L12.8 8.8 L12.7 9.0 L12.7 9.2 L12.6 9.4 L12.5 9.6 L12.5 9.9 L12.4 10.1 L12.3 10.3 L12.5 10.7 L12.7 11.1 L12.9 11.5 L12.7 11.8 L12.6 12.0 L12.4 12.2 L12.2 12.4 L12.0 12.6 L11.8 12.8 L11.6 13.0 L11.1 12.9 L10.7 12.7 L10.3 12.5 L10.1 12.6 L9.9 12.7 L9.7 12.9 L9.5 13.0 L9.3 13.1 L9.0 13.1 L8.8 13.2 L8.7 13.7 L8.6 14.1 L8.4 14.6 L8.1 14.6 L7.8 14.7 L7.6 14.7 L7.3 14.7 L7.0 14.7 L6.7 14.7 L6.4 14.7 L6.2 14.3 L6.0 13.8 L5.8 13.4 L5.6 13.3 L5.4 13.3 L5.2 13.2 L5.0 13.1 L4.7 13.1 L4.5 13.0 L4.3 12.9 L3.9 13.1 L3.5 13.3 L3.1 13.5 L2.8 13.3 L2.6 13.2 L2.4 13.0 L2.2 12.8 L2.0 12.6 L1.8 12.4 L1.6 12.2 L1.7 11.7 L1.9 11.3 L2.1 10.9 L2.0 10.7 L1.9 10.5 L1.7 10.3 L1.6 10.1 L1.5 9.9 L1.5 9.6 L1.4 9.4 L0.9 9.3 L0.5 9.2 L0.0 9.0 L-0.0 8.7 L-0.1 8.4 L-0.1 8.2 L-0.1 7.9 L-0.1 7.6 L-0.1 7.3 L-0.1 7.0 L0.3 6.8 L0.8 6.6 L1.2 6.4 L1.3 6.2 L1.3 6.0 L1.4 5.8 L1.5 5.6 L1.5 5.3 L1.6 5.1 L1.7 4.9 L1.5 4.5 L1.3 4.1 L1.1 3.7 L1.3 3.4 L1.4 3.2 L1.6 3.0 L1.8 2.8 L2.0 2.6 L2.2 2.4 L2.4 2.2 L2.9 2.3 L3.3 2.5 L3.7 2.7 L3.9 2.6 L4.1 2.5 L4.3 2.3 L4.5 2.2 L4.7 2.1 L5.0 2.1 L5.2 2.0 L5.3 1.5 L5.4 1.1 L5.6 0.6 L5.9 0.6 L6.2 0.5 L6.4 0.5 L6.7 0.5 L7.0 0.5 L7.3 0.5 L7.6 0.5 L7.8 0.9 L8.0 1.4 L8.2 1.8 L8.4 1.9 L8.6 1.9 L8.8 2.0 L9.0 2.1 L9.3 2.1 L9.5 2.2 L9.7 2.3 L10.1 2.1 L10.5 1.9 L10.9 1.7 L11.2 1.9 L11.4 2.0 L11.6 2.2 L11.8 2.4 L12.0 2.6 L12.2 2.8 L12.4 3.0 L12.3 3.5 L12.1 3.9 L11.9 4.3 L12.0 4.5 L12.1 4.7 L12.3 4.9 L12.4 5.1 L12.5 5.3 L12.5 5.6 L12.6 5.8 L13.1 5.9 L13.5 6.0 L14.0 6.2 L14.0 6.5 L14.1 6.8 L14.1 7.0 L14.1 7.3Z M11.3 7.6 A4.3 4.3 0 1 0 2.7 7.6 A4.3 4.3 0 1 0 11.3 7.6Z"/><path fill="none" stroke="url(#gg6)" stroke-width="1.25" stroke-linecap="round" d="M9.97 7.15 L9.84 6.77 L9.67 6.42 L9.45 6.10 L9.19 5.81 L8.91 5.57 L8.59 5.37 L8.26 5.21 L7.92 5.10 L7.57 5.05 L7.22 5.03 L6.88 5.07 L6.55 5.15 L6.24 5.27 L5.96 5.43 L5.70 5.63 L5.48 5.85 L5.29 6.10 L5.14 6.36 L5.03 6.64 L4.96 6.92 L4.93 7.21 L4.94 7.49 L4.98 7.76 L5.06 8.02 L5.18 8.26 L5.32 8.47 L5.49 8.67 L5.67 8.83 L5.87 8.96 L6.09 9.06 L6.31 9.13 L6.53 9.17 L6.75 9.18 L6.96 9.15 L7.17 9.10 L7.36 9.03 L7.53 8.93 L7.68 8.81 L7.81 8.67 L7.91 8.53"/></svg>
<div style="position:absolute;left:288px;top:849px;width:1176px;height:1px;background:#e0e0e0;"></div>
<div class="t" style="left:312px;top:867.00px;font-size:13px;line-height:13px;color:#2196f3;letter-spacing:0.06px;">traffic-564b9c9765-4dh6b</div>
<div class="t" style="right:889px;top:867.00px;font-size:13px;line-height:13px;color:rgba(0,0,0,0.87);text-align:right;">1/1</div>
<div class="t" style="right:751.2px;top:867.00px;font-size:13px;line-height:13px;color:rgba(0,0,0,0.62);text-align:right;letter-spacing:-0.2px;">---</div>
<div class="t" style="right:654.2px;top:867.00px;font-size:13px;line-height:13px;color:rgba(0,0,0,0.62);text-align:right;letter-spacing:-0.2px;">---</div>
<div class="t" style="right:516.2px;top:867.00px;font-size:13px;line-height:13px;color:rgba(0,0,0,0.62);text-align:right;letter-spacing:-0.2px;">---</div>
<div class="t" style="right:377.20000000000005px;top:867.00px;font-size:13px;line-height:13px;color:rgba(0,0,0,0.62);text-align:right;letter-spacing:-0.2px;">---</div>
<div class="t" style="right:238.20000000000005px;top:867.00px;font-size:13px;line-height:13px;color:rgba(0,0,0,0.62);text-align:right;letter-spacing:-0.2px;">---</div>
<div class="t" style="right:150.20000000000005px;top:867.00px;font-size:13px;line-height:13px;color:rgba(0,0,0,0.62);text-align:right;letter-spacing:-0.2px;">---</div>
<svg style="position:absolute;left:1426px;top:864px;" width="14" height="16" viewBox="0 0 14 16"><defs><linearGradient id="gg7" x1="0" y1="0" x2="0" y2="16" gradientUnits="userSpaceOnUse"><stop offset="0" stop-color="#f05a28"/><stop offset="1" stop-color="#fbca0a"/></linearGradient></defs>
<path fill="url(#gg7)" fill-rule="evenodd" d="M14.1 7.6 L14.1 7.9 L14.1 8.2 L13.7 8.4 L13.2 8.6 L12.8 8.8 L12.7 9.0 L12.7 9.2 L12.6 9.4 L12.5 9.6 L12.5 9.9 L12.4 10.1 L12.3 10.3 L12.5 10.7 L12.7 11.1 L12.9 11.5 L12.7 11.8 L12.6 12.0 L12.4 12.2 L12.2 12.4 L12.0 12.6 L11.8 12.8 L11.6 13.0 L11.1 12.9 L10.7 12.7 L10.3 12.5 L10.1 12.6 L9.9 12.7 L9.7 12.9 L9.5 13.0 L9.3 13.1 L9.0 13.1 L8.8 13.2 L8.7 13.7 L8.6 14.1 L8.4 14.6 L8.1 14.6 L7.8 14.7 L7.6 14.7 L7.3 14.7 L7.0 14.7 L6.7 14.7 L6.4 14.7 L6.2 14.3 L6.0 13.8 L5.8 13.4 L5.6 13.3 L5.4 13.3 L5.2 13.2 L5.0 13.1 L4.7 13.1 L4.5 13.0 L4.3 12.9 L3.9 13.1 L3.5 13.3 L3.1 13.5 L2.8 13.3 L2.6 13.2 L2.4 13.0 L2.2 12.8 L2.0 12.6 L1.8 12.4 L1.6 12.2 L1.7 11.7 L1.9 11.3 L2.1 10.9 L2.0 10.7 L1.9 10.5 L1.7 10.3 L1.6 10.1 L1.5 9.9 L1.5 9.6 L1.4 9.4 L0.9 9.3 L0.5 9.2 L0.0 9.0 L-0.0 8.7 L-0.1 8.4 L-0.1 8.2 L-0.1 7.9 L-0.1 7.6 L-0.1 7.3 L-0.1 7.0 L0.3 6.8 L0.8 6.6 L1.2 6.4 L1.3 6.2 L1.3 6.0 L1.4 5.8 L1.5 5.6 L1.5 5.3 L1.6 5.1 L1.7 4.9 L1.5 4.5 L1.3 4.1 L1.1 3.7 L1.3 3.4 L1.4 3.2 L1.6 3.0 L1.8 2.8 L2.0 2.6 L2.2 2.4 L2.4 2.2 L2.9 2.3 L3.3 2.5 L3.7 2.7 L3.9 2.6 L4.1 2.5 L4.3 2.3 L4.5 2.2 L4.7 2.1 L5.0 2.1 L5.2 2.0 L5.3 1.5 L5.4 1.1 L5.6 0.6 L5.9 0.6 L6.2 0.5 L6.4 0.5 L6.7 0.5 L7.0 0.5 L7.3 0.5 L7.6 0.5 L7.8 0.9 L8.0 1.4 L8.2 1.8 L8.4 1.9 L8.6 1.9 L8.8 2.0 L9.0 2.1 L9.3 2.1 L9.5 2.2 L9.7 2.3 L10.1 2.1 L10.5 1.9 L10.9 1.7 L11.2 1.9 L11.4 2.0 L11.6 2.2 L11.8 2.4 L12.0 2.6 L12.2 2.8 L12.4 3.0 L12.3 3.5 L12.1 3.9 L11.9 4.3 L12.0 4.5 L12.1 4.7 L12.3 4.9 L12.4 5.1 L12.5 5.3 L12.5 5.6 L12.6 5.8 L13.1 5.9 L13.5 6.0 L14.0 6.2 L14.0 6.5 L14.1 6.8 L14.1 7.0 L14.1 7.3Z M11.3 7.6 A4.3 4.3 0 1 0 2.7 7.6 A4.3 4.3 0 1 0 11.3 7.6Z"/><path fill="none" stroke="url(#gg7)" stroke-width="1.25" stroke-linecap="round" d="M9.97 7.15 L9.84 6.77 L9.67 6.42 L9.45 6.10 L9.19 5.81 L8.91 5.57 L8.59 5.37 L8.26 5.21 L7.92 5.10 L7.57 5.05 L7.22 5.03 L6.88 5.07 L6.55 5.15 L6.24 5.27 L5.96 5.43 L5.70 5.63 L5.48 5.85 L5.29 6.10 L5.14 6.36 L5.03 6.64 L4.96 6.92 L4.93 7.21 L4.94 7.49 L4.98 7.76 L5.06 8.02 L5.18 8.26 L5.32 8.47 L5.49 8.67 L5.67 8.83 L5.87 8.96 L6.09 9.06 L6.31 9.13 L6.53 9.17 L6.75 9.18 L6.96 9.15 L7.17 9.10 L7.36 9.03 L7.53 8.93 L7.68 8.81 L7.81 8.67 L7.91 8.53"/></svg>
<div style="position:absolute;left:288px;top:897px;width:1176px;height:1px;background:#e0e0e0;"></div>
<div class="t" style="left:312px;top:915.00px;font-size:13px;line-height:13px;color:#2196f3;letter-spacing:0.06px;">webapp-597f989b66-6mxpq</div>
<div class="t" style="right:889px;top:915.00px;font-size:13px;line-height:13px;color:rgba(0,0,0,0.87);text-align:right;">1/1</div>
<div class="t" style="right:759.5px;top:915.00px;font-size:13px;line-height:13px;color:rgba(0,0,0,0.87);text-align:right;">69.14%</div>
<div style="position:absolute;left:751px;top:918px;width:8px;height:8px;border-radius:50%;background:#f44336;"></div>
<div class="t" style="right:654px;top:915.00px;font-size:13px;line-height:13px;color:rgba(0,0,0,0.87);text-align:right;">2.92</div>
<div class="t" style="right:516px;top:915.00px;font-size:13px;line-height:13px;color:rgba(0,0,0,0.87);text-align:right;">24 ms</div>
<div class="t" style="right:377px;top:915.00px;font-size:13px;line-height:13px;color:rgba(0,0,0,0.87);text-align:right;">92 ms</div>
<div class="t" style="right:238px;top:915.00px;font-size:13px;line-height:13px;color:rgba(0,0,0,0.87);text-align:right;">174 ms</div>
<div class="t" style="right:150px;top:915.00px;font-size:13px;line-height:13px;color:rgba(0,0,0,0.87);text-align:right;">0.0%</div>
<svg style="position:absolute;left:1426px;top:912px;" width="14" height="16" viewBox="0 0 14 16"><defs><linearGradient id="gg8" x1="0" y1="0" x2="0" y2="16" gradientUnits="userSpaceOnUse"><stop offset="0" stop-color="#f05a28"/><stop offset="1" stop-color="#fbca0a"/></linearGradient></defs>
<path fill="url(#gg8)" fill-rule="evenodd" d="M14.1 7.6 L14.1 7.9 L14.1 8.2 L13.7 8.4 L13.2 8.6 L12.8 8.8 L12.7 9.0 L12.7 9.2 L12.6 9.4 L12.5 9.6 L12.5 9.9 L12.4 10.1 L12.3 10.3 L12.5 10.7 L12.7 11.1 L12.9 11.5 L12.7 11.8 L12.6 12.0 L12.4 12.2 L12.2 12.4 L12.0 12.6 L11.8 12.8 L11.6 13.0 L11.1 12.9 L10.7 12.7 L10.3 12.5 L10.1 12.6 L9.9 12.7 L9.7 12.9 L9.5 13.0 L9.3 13.1 L9.0 13.1 L8.8 13.2 L8.7 13.7 L8.6 14.1 L8.4 14.6 L8.1 14.6 L7.8 14.7 L7.6 14.7 L7.3 14.7 L7.0 14.7 L6.7 14.7 L6.4 14.7 L6.2 14.3 L6.0 13.8 L5.8 13.4 L5.6 13.3 L5.4 13.3 L5.2 13.2 L5.0 13.1 L4.7 13.1 L4.5 13.0 L4.3 12.9 L3.9 13.1 L3.5 13.3 L3.1 13.5 L2.8 13.3 L2.6 13.2 L2.4 13.0 L2.2 12.8 L2.0 12.6 L1.8 12.4 L1.6 12.2 L1.7 11.7 L1.9 11.3 L2.1 10.9 L2.0 10.7 L1.9 10.5 L1.7 10.3 L1.6 10.1 L1.5 9.9 L1.5 9.6 L1.4 9.4 L0.9 9.3 L0.5 9.2 L0.0 9.0 L-0.0 8.7 L-0.1 8.4 L-0.1 8.2 L-0.1 7.9 L-0.1 7.6 L-0.1 7.3 L-0.1 7.0 L0.3 6.8 L0.8 6.6 L1.2 6.4 L1.3 6.2 L1.3 6.0 L1.4 5.8 L1.5 5.6 L1.5 5.3 L1.6 5.1 L1.7 4.9 L1.5 4.5 L1.3 4.1 L1.1 3.7 L1.3 3.4 L1.4 3.2 L1.6 3.0 L1.8 2.8 L2.0 2.6 L2.2 2.4 L2.4 2.2 L2.9 2.3 L3.3 2.5 L3.7 2.7 L3.9 2.6 L4.1 2.5 L4.3 2.3 L4.5 2.2 L4.7 2.1 L5.0 2.1 L5.2 2.0 L5.3 1.5 L5.4 1.1 L5.6 0.6 L5.9 0.6 L6.2 0.5 L6.4 0.5 L6.7 0.5 L7.0 0.5 L7.3 0.5 L7.6 0.5 L7.8 0.9 L8.0 1.4 L8.2 1.8 L8.4 1.9 L8.6 1.9 L8.8 2.0 L9.0 2.1 L9.3 2.1 L9.5 2.2 L9.7 2.3 L10.1 2.1 L10.5 1.9 L10.9 1.7 L11.2 1.9 L11.4 2.0 L11.6 2.2 L11.8 2.4 L12.0 2.6 L12.2 2.8 L12.4 3.0 L12.3 3.5 L12.1 3.9 L11.9 4.3 L12.0 4.5 L12.1 4.7 L12.3 4.9 L12.4 5.1 L12.5 5.3 L12.5 5.6 L12.6 5.8 L13.1 5.9 L13.5 6.0 L14.0 6.2 L14.0 6.5 L14.1 6.8 L14.1 7.0 L14.1 7.3Z M11.3 7.6 A4.3 4.3 0 1 0 2.7 7.6 A4.3 4.3 0 1 0 11.3 7.6Z"/><path fill="none" stroke="url(#gg8)" stroke-width="1.25" stroke-linecap="round" d="M9.97 7.15 L9.84 6.77 L9.67 6.42 L9.45 6.10 L9.19 5.81 L8.91 5.57 L8.59 5.37 L8.26 5.21 L7.92 5.10 L7.57 5.05 L7.22 5.03 L6.88 5.07 L6.55 5.15 L6.24 5.27 L5.96 5.43 L5.70 5.63 L5.48 5.85 L5.29 6.10 L5.14 6.36 L5.03 6.64 L4.96 6.92 L4.93 7.21 L4.94 7.49 L4.98 7.76 L5.06 8.02 L5.18 8.26 L5.32 8.47 L5.49 8.67 L5.67 8.83 L5.87 8.96 L6.09 9.06 L6.31 9.13 L6.53 9.17 L6.75 9.18 L6.96 9.15 L7.17 9.10 L7.36 9.03 L7.53 8.93 L7.68 8.81 L7.81 8.67 L7.91 8.53"/></svg>
<div style="position:absolute;left:288px;top:945px;width:1176px;height:1px;background:#e0e0e0;"></div>
<div class="t" style="left:312px;top:963.00px;font-size:13px;line-height:13px;color:#2196f3;letter-spacing:0.06px;">webapp-597f989b66-8dzbc</div>
<div class="t" style="right:889px;top:963.00px;font-size:13px;line-height:13px;color:rgba(0,0,0,0.87);text-align:right;">1/1</div>
<div class="t" style="right:759.5px;top:963.00px;font-size:13px;line-height:13px;color:rgba(0,0,0,0.87);text-align:right;">85.23%</div>
<div style="position:absolute;left:751px;top:966px;width:8px;height:8px;border-radius:50%;background:#f44336;"></div>
<div class="t" style="right:654px;top:963.00px;font-size:13px;line-height:13px;color:rgba(0,0,0,0.87);text-align:right;">2.48</div>
<div class="t" style="right:516px;top:963.00px;font-size:13px;line-height:13px;color:rgba(0,0,0,0.87);text-align:right;">32 ms</div>
<div class="t" style="right:377px;top:963.00px;font-size:13px;line-height:13px;color:rgba(0,0,0,0.87);text-align:right;">115 ms</div>
<div class="t" style="right:238px;top:963.00px;font-size:13px;line-height:13px;color:rgba(0,0,0,0.87);text-align:right;">183 ms</div>
<div class="t" style="right:150px;top:963.00px;font-size:13px;line-height:13px;color:rgba(0,0,0,0.87);text-align:right;">0.0%</div>
<svg style="position:absolute;left:1426px;top:960px;" width="14" height="16" viewBox="0 0 14 16"><defs><linearGradient id="gg9" x1="0" y1="0" x2="0" y2="16" gradientUnits="userSpaceOnUse"><stop offset="0" stop-color="#f05a28"/><stop offset="1" stop-color="#fbca0a"/></linearGradient></defs>
<path fill="url(#gg9)" fill-rule="evenodd" d="M14.1 7.6 L14.1 7.9 L14.1 8.2 L13.7 8.4 L13.2 8.6 L12.8 8.8 L12.7 9.0 L12.7 9.2 L12.6 9.4 L12.5 9.6 L12.5 9.9 L12.4 10.1 L12.3 10.3 L12.5 10.7 L12.7 11.1 L12.9 11.5 L12.7 11.8 L12.6 12.0 L12.4 12.2 L12.2 12.4 L12.0 12.6 L11.8 12.8 L11.6 13.0 L11.1 12.9 L10.7 12.7 L10.3 12.5 L10.1 12.6 L9.9 12.7 L9.7 12.9 L9.5 13.0 L9.3 13.1 L9.0 13.1 L8.8 13.2 L8.7 13.7 L8.6 14.1 L8.4 14.6 L8.1 14.6 L7.8 14.7 L7.6 14.7 L7.3 14.7 L7.0 14.7 L6.7 14.7 L6.4 14.7 L6.2 14.3 L6.0 13.8 L5.8 13.4 L5.6 13.3 L5.4 13.3 L5.2 13.2 L5.0 13.1 L4.7 13.1 L4.5 13.0 L4.3 12.9 L3.9 13.1 L3.5 13.3 L3.1 13.5 L2.8 13.3 L2.6 13.2 L2.4 13.0 L2.2 12.8 L2.0 12.6 L1.8 12.4 L1.6 12.2 L1.7 11.7 L1.9 11.3 L2.1 10.9 L2.0 10.7 L1.9 10.5 L1.7 10.3 L1.6 10.1 L1.5 9.9 L1.5 9.6 L1.4 9.4 L0.9 9.3 L0.5 9.2 L0.0 9.0 L-0.0 8.7 L-0.1 8.4 L-0.1 8.2 L-0.1 7.9 L-0.1 7.6 L-0.1 7.3 L-0.1 7.0 L0.3 6.8 L0.8 6.6 L1.2 6.4 L1.3 6.2 L1.3 6.0 L1.4 5.8 L1.5 5.6 L1.5 5.3 L1.6 5.1 L1.7 4.9 L1.5 4.5 L1.3 4.1 L1.1 3.7 L1.3 3.4 L1.4 3.2 L1.6 3.0 L1.8 2.8 L2.0 2.6 L2.2 2.4 L2.4 2.2 L2.9 2.3 L3.3 2.5 L3.7 2.7 L3.9 2.6 L4.1 2.5 L4.3 2.3 L4.5 2.2 L4.7 2.1 L5.0 2.1 L5.2 2.0 L5.3 1.5 L5.4 1.1 L5.6 0.6 L5.9 0.6 L6.2 0.5 L6.4 0.5 L6.7 0.5 L7.0 0.5 L7.3 0.5 L7.6 0.5 L7.8 0.9 L8.0 1.4 L8.2 1.8 L8.4 1.9 L8.6 1.9 L8.8 2.0 L9.0 2.1 L9.3 2.1 L9.5 2.2 L9.7 2.3 L10.1 2.1 L10.5 1.9 L10.9 1.7 L11.2 1.9 L11.4 2.0 L11.6 2.2 L11.8 2.4 L12.0 2.6 L12.2 2.8 L12.4 3.0 L12.3 3.5 L12.1 3.9 L11.9 4.3 L12.0 4.5 L12.1 4.7 L12.3 4.9 L12.4 5.1 L12.5 5.3 L12.5 5.6 L12.6 5.8 L13.1 5.9 L13.5 6.0 L14.0 6.2 L14.0 6.5 L14.1 6.8 L14.1 7.0 L14.1 7.3Z M11.3 7.6 A4.3 4.3 0 1 0 2.7 7.6 A4.3 4.3 0 1 0 11.3 7.6Z"/><path fill="none" stroke="url(#gg9)" stroke-width="1.25" stroke-linecap="round" d="M9.97 7.15 L9.84 6.77 L9.67 6.42 L9.45 6.10 L9.19 5.81 L8.91 5.57 L8.59 5.37 L8.26 5.21 L7.92 5.10 L7.57 5.05 L7.22 5.03 L6.88 5.07 L6.55 5.15 L6.24 5.27 L5.96 5.43 L5.70 5.63 L5.48 5.85 L5.29 6.10 L5.14 6.36 L5.03 6.64 L4.96 6.92 L4.93 7.21 L4.94 7.49 L4.98 7.76 L5.06 8.02 L5.18 8.26 L5.32 8.47 L5.49 8.67 L5.67 8.83 L5.87 8.96 L6.09 9.06 L6.31 9.13 L6.53 9.17 L6.75 9.18 L6.96 9.15 L7.17 9.10 L7.36 9.03 L7.53 8.93 L7.68 8.81 L7.81 8.67 L7.91 8.53"/></svg>
<div style="position:absolute;left:288px;top:993px;width:1176px;height:1px;background:#e0e0e0;"></div>
<div class="t" style="left:312px;top:1011.00px;font-size:13px;line-height:13px;color:#2196f3;letter-spacing:0.06px;">webapp-597f989b66-l8kxc</div>
<div class="t" style="right:889px;top:1011.00px;font-size:13px;line-height:13px;color:rgba(0,0,0,0.87);text-align:right;">1/1</div>
<div class="t" style="right:759.5px;top:1011.00px;font-size:13px;line-height:13px;color:rgba(0,0,0,0.87);text-align:right;">80.00%</div>
<div style="position:absolute;left:751px;top:1014px;width:8px;height:8px;border-radius:50%;background:#f44336;"></div>
<div class="t" style="right:654px;top:1011.00px;font-size:13px;line-height:13px;color:rgba(0,0,0,0.87);text-align:right;">1.83</div>
<div class="t" style="right:516px;top:1011.00px;font-size:13px;line-height:13px;color:rgba(0,0,0,0.87);text-align:right;">20 ms</div>
<div class="t" style="right:377px;top:1011.00px;font-size:13px;line-height:13px;color:rgba(0,0,0,0.87);text-align:right;">84 ms</div>
<div class="t" style="right:238px;top:1011.00px;font-size:13px;line-height:13px;color:rgba(0,0,0,0.87);text-align:right;">97 ms</div>
<div class="t" style="right:150px;top:1011.00px;font-size:13px;line-height:13px;color:rgba(0,0,0,0.87);text-align:right;">0.0%</div>
<svg style="position:absolute;left:1426px;top:1008px;" width="14" height="16" viewBox="0 0 14 16"><defs><linearGradient id="gg10" x1="0" y1="0" x2="0" y2="16" gradientUnits="userSpaceOnUse"><stop offset="0" stop-color="#f05a28"/><stop offset="1" stop-color="#fbca0a"/></linearGradient></defs>
<path fill="url(#gg10)" fill-rule="evenodd" d="M14.1 7.6 L14.1 7.9 L14.1 8.2 L13.7 8.4 L13.2 8.6 L12.8 8.8 L12.7 9.0 L12.7 9.2 L12.6 9.4 L12.5 9.6 L12.5 9.9 L12.4 10.1 L12.3 10.3 L12.5 10.7 L12.7 11.1 L12.9 11.5 L12.7 11.8 L12.6 12.0 L12.4 12.2 L12.2 12.4 L12.0 12.6 L11.8 12.8 L11.6 13.0 L11.1 12.9 L10.7 12.7 L10.3 12.5 L10.1 12.6 L9.9 12.7 L9.7 12.9 L9.5 13.0 L9.3 13.1 L9.0 13.1 L8.8 13.2 L8.7 13.7 L8.6 14.1 L8.4 14.6 L8.1 14.6 L7.8 14.7 L7.6 14.7 L7.3 14.7 L7.0 14.7 L6.7 14.7 L6.4 14.7 L6.2 14.3 L6.0 13.8 L5.8 13.4 L5.6 13.3 L5.4 13.3 L5.2 13.2 L5.0 13.1 L4.7 13.1 L4.5 13.0 L4.3 12.9 L3.9 13.1 L3.5 13.3 L3.1 13.5 L2.8 13.3 L2.6 13.2 L2.4 13.0 L2.2 12.8 L2.0 12.6 L1.8 12.4 L1.6 12.2 L1.7 11.7 L1.9 11.3 L2.1 10.9 L2.0 10.7 L1.9 10.5 L1.7 10.3 L1.6 10.1 L1.5 9.9 L1.5 9.6 L1.4 9.4 L0.9 9.3 L0.5 9.2 L0.0 9.0 L-0.0 8.7 L-0.1 8.4 L-0.1 8.2 L-0.1 7.9 L-0.1 7.6 L-0.1 7.3 L-0.1 7.0 L0.3 6.8 L0.8 6.6 L1.2 6.4 L1.3 6.2 L1.3 6.0 L1.4 5.8 L1.5 5.6 L1.5 5.3 L1.6 5.1 L1.7 4.9 L1.5 4.5 L1.3 4.1 L1.1 3.7 L1.3 3.4 L1.4 3.2 L1.6 3.0 L1.8 2.8 L2.0 2.6 L2.2 2.4 L2.4 2.2 L2.9 2.3 L3.3 2.5 L3.7 2.7 L3.9 2.6 L4.1 2.5 L4.3 2.3 L4.5 2.2 L4.7 2.1 L5.0 2.1 L5.2 2.0 L5.3 1.5 L5.4 1.1 L5.6 0.6 L5.9 0.6 L6.2 0.5 L6.4 0.5 L6.7 0.5 L7.0 0.5 L7.3 0.5 L7.6 0.5 L7.8 0.9 L8.0 1.4 L8.2 1.8 L8.4 1.9 L8.6 1.9 L8.8 2.0 L9.0 2.1 L9.3 2.1 L9.5 2.2 L9.7 2.3 L10.1 2.1 L10.5 1.9 L10.9 1.7 L11.2 1.9 L11.4 2.0 L11.6 2.2 L11.8 2.4 L12.0 2.6 L12.2 2.8 L12.4 3.0 L12.3 3.5 L12.1 3.9 L11.9 4.3 L12.0 4.5 L12.1 4.7 L12.3 4.9 L12.4 5.1 L12.5 5.3 L12.5 5.6 L12.6 5.8 L13.1 5.9 L13.5 6.0 L14.0 6.2 L14.0 6.5 L14.1 6.8 L14.1 7.0 L14.1 7.3Z M11.3 7.6 A4.3 4.3 0 1 0 2.7 7.6 A4.3 4.3 0 1 0 11.3 7.6Z"/><path fill="none" stroke="url(#gg10)" stroke-width="1.25" stroke-linecap="round" d="M9.97 7.15 L9.84 6.77 L9.67 6.42 L9.45 6.10 L9.19 5.81 L8.91 5.57 L8.59 5.37 L8.26 5.21 L7.92 5.10 L7.57 5.05 L7.22 5.03 L6.88 5.07 L6.55 5.15 L6.24 5.27 L5.96 5.43 L5.70 5.63 L5.48 5.85 L5.29 6.10 L5.14 6.36 L5.03 6.64 L4.96 6.92 L4.93 7.21 L4.94 7.49 L4.98 7.76 L5.06 8.02 L5.18 8.26 L5.32 8.47 L5.49 8.67 L5.67 8.83 L5.87 8.96 L6.09 9.06 L6.31 9.13 L6.53 9.17 L6.75 9.18 L6.96 9.15 L7.17 9.10 L7.36 9.03 L7.53 8.93 L7.68 8.81 L7.81 8.67 L7.91 8.53"/></svg>
<div style="position:absolute;left:288px;top:1041px;width:1176px;height:1px;background:#e0e0e0;"></div>
<div style="position:absolute;left:0px;top:64px;width:247px;height:987px;background:#fff;"></div>
<div style="position:absolute;left:0px;top:73px;width:247px;height:46px;background:rgba(0,0,0,0.14);"></div>
<div style="position:absolute;left:0px;top:403px;width:247px;height:1px;background:rgba(0,0,0,0.12);"></div>
<div class="t" style="left:80px;top:88.46px;font-size:16px;line-height:16px;color:rgba(0,0,0,0.87);">Overview</div>
<div class="t" style="left:80px;top:134.46px;font-size:16px;line-height:16px;color:rgba(0,0,0,0.87);">Tap</div>
<div class="t" style="left:80px;top:180.46px;font-size:16px;line-height:16px;color:rgba(0,0,0,0.87);">Top</div>
<div class="t" style="left:80px;top:226.46px;font-size:16px;line-height:16px;color:rgba(0,0,0,0.87);">Top Routes</div>
<div class="t" style="left:80px;top:272.46px;font-size:16px;line-height:16px;color:rgba(0,0,0,0.87);">Service Mesh</div>
<div class="t" style="left:80px;top:318.46px;font-size:16px;line-height:16px;color:rgba(0,0,0,0.87);">Resources</div>
<div class="t" style="left:80px;top:364.46px;font-size:16px;line-height:16px;color:rgba(0,0,0,0.87);">Debug</div>
<div class="t" style="left:80px;top:429.46px;font-size:16px;line-height:16px;color:rgba(0,0,0,0.87);letter-spacing:0.3px;">Documentation</div>
<div class="t" style="left:80px;top:477.96px;font-size:16px;line-height:16px;color:rgba(0,0,0,0.87);letter-spacing:0.27px;">Community</div>
<div class="t" style="left:80px;top:525.96px;font-size:16px;line-height:16px;color:rgba(0,0,0,0.87);letter-spacing:0.22px;">Join the Mailing List</div>
<div class="t" style="left:80px;top:575.46px;font-size:16px;line-height:16px;color:rgba(0,0,0,0.87);">Join us on Slack</div>
<div class="t" style="left:80px;top:625.46px;font-size:16px;line-height:16px;color:rgba(0,0,0,0.87);">File an Issue</div>
<div class="t" style="left:24px;top:692.84px;font-size:12px;line-height:12px;color:rgba(0,0,0,0.87);">Running Linkerd 19.3.2 (edge).</div>
<div class="t" style="left:24px;top:710.84px;font-size:12px;line-height:12px;color:rgba(0,0,0,0.87);letter-spacing:0.06px;">Linkerd is up to date.</div>
<svg style="position:absolute;left:24px;top:84px;" width="24" height="24" viewBox="0 0 24 24"><path fill="rgba(0,0,0,0.54)" d="M10 20v-6h4v6h5v-8h3L12 3 2 12h3v8z"/></svg>
<svg style="position:absolute;left:27px;top:133px;" width="18" height="18" viewBox="0 0 512 512"><path fill="rgba(0,0,0,0.54)" d="M160 320h12v16c0 8.84 7.16 16 16 16h40c8.84 0 16-7.16 16-16v-16h12c17.67 0 32-14.33 32-32V64c0-17.67-14.33-32-32-32V16c0-8.84-7.16-16-16-16h-64c-8.84 0-16 7.16-16 16v16c-17.67 0-32 14.33-32 32v224c0 17.67 14.330 32 32 32zm304 128h-1.29C493.24 413.99 512 369.2 512 320c0-105.88-86.12-192-192-192v64c70.58 0 128 57.42 128 128s-57.42 128-128 128H48c-26.51 0-48 21.49-48 48 0 8.840 7.16 16 16 16h480c8.84 0 16-7.16 16-16 0-8.84-7.16-16-16-16zm-360-32h208c4.42 0 8-3.58 8-8v-16c0-4.42-3.58-8-8-8H104c-4.42 0-8 3.58-8 8v16c0 4.42 3.58 8 8 8z"/></svg>
<svg style="position:absolute;left:27px;top:179.3px;" width="18" height="18" viewBox="0 0 512 512"><path fill="rgba(0,0,0,0.54)" d="M16 128h416c8.84 0 16-7.16 16-16V48c0-8.84-7.16-16-16-16H16C7.16 32 0 39.16 0 48v64c0 8.84 7.16 16 16 16zm480 80H80c-8.84 0-16 7.16-16 16v64c0 8.84 7.16 16 16 16h416c8.84 0 16-7.16 16-16v-64c0-8.84-7.16-16-16-16zm-64 176H16c-8.84 0-16 7.16-16 16v64c0 8.84 7.16 16 16 16h416c8.84 0 16-7.16 16-16v-64c0-8.84-7.16-16-16-16z"/></svg>
<svg style="position:absolute;left:27px;top:225px;" width="18" height="18" viewBox="0 0 512 512"><path fill="rgba(0,0,0,0.54)" d="M504.971 359.029c9.373 9.373 9.373 24.569 0 33.941l-80 79.984c-15.01 15.01-40.971 4.49-40.971-16.971V416h-58.785a12.004 12.004 0 0 1-8.773-3.812l-70.556-75.596 53.333-57.143L352 336h32v-39.981c0-21.438 25.943-31.998 40.971-16.971l80 79.981zM12 176h84l52.781 56.551 53.333-57.143-70.556-75.596A11.999 11.999 0 0 0 122.785 96H12c-6.627 0-12 5.373-12 12v56c0 6.627 5.373 12 12 12zm372 0v39.984c0 21.46 25.961 31.98 40.971 16.971l80-79.984c9.373-9.373 9.373-24.569 0-33.941l-80-79.981C409.943 24.021 384 34.582 384 56.019V96h-58.785a12.004 12.004 0 0 0-8.773 3.812L96 336H12c-6.627 0-12 5.373-12 12v56c0 6.627 5.373 12 12 12h110.785c3.326 0 6.503-1.381 8.773-3.812L352 176h32z"/></svg>
<svg style="position:absolute;left:27.1px;top:271px;" width="17.8" height="17.8" viewBox="0 0 24 24"><path fill="rgba(0,0,0,0.54)" d="M19.35 10.04C18.67 6.59 15.64 4 12 4 9.11 4 6.6 5.64 5.35 8.04 2.34 8.36 0 10.91 0 14c0 3.31 2.69 6 6 6h13c2.76 0 5-2.24 5-5 0-2.64-2.05-4.78-4.650-4.96zM19 18H6c-2.21 0-4-1.79-4-4s1.79-4 4-4h.71C7.37 7.690 9.48 6 12 6c3.04 0 5.5 2.46 5.5 5.5v.5H19c1.66 0 3 1.34 3 3s-1.34 3-3 3z"/></svg>
<svg style="position:absolute;left:24px;top:314px;" width="24" height="24" viewBox="0 0 24 24"><path fill="rgba(0,0,0,0.54)" d="M4 14h4v-4H4v4zm0 5h4v-4H4v4zM4 9h4V5H4v4zm5 5h12v-4H9v4zm0 5h12v-4H9v4zM9 5v4h12V5H9z"/></svg>
<svg style="position:absolute;left:199px;top:314px;" width="24" height="24" viewBox="0 0 24 24"><path fill="rgba(0,0,0,0.87)" d="M16.59 8.59L12 13.17 7.41 8.59 6 10l6 6 6-6z"/></svg>
<svg style="position:absolute;left:27px;top:362.4px;" width="18" height="18" viewBox="0 0 24 24"><path fill="rgba(0,0,0,0.54)" d="M22.7 19l-9.1-9.1c.9-2.3.4-5-1.5-6.9-2-2-5-2.4-7.4-1.3L9 6 6 9 1.6 4.7C.4 7.1.9 10.1 2.9 12.1c1.9 1.9 4.6 2.4 6.9 1.5l9.1 9.1c.4.4 1 .4 1.4 0l2.3-2.3c.5-.4.5-1.1.1-1.4z"/></svg>
<svg style="position:absolute;left:24px;top:425px;" width="24" height="24" viewBox="0 0 24 24"><path fill="rgba(0,0,0,0.54)" d="M4 6H2v14c0 1.1.9 2 2 2h14v-2H4V6zm16-4H8c-1.1 0-2 .9-2 2v12c0 1.1.9 2 2 2h12c1.1 0 2-.9 2-2V4c0-1.1-.9-2-2-2zm-1 9H9V9h10v2zm-4 4H9v-2h6v2zm4-8H9V5h10v2z"/></svg>
<svg style="position:absolute;left:24px;top:473px;" width="24" height="24" viewBox="0 0 24 24"><path fill="rgba(0,0,0,0.54)" d="M11.99 2C6.47 2 2 6.48 2 12s4.47 10 9.99 10C17.52 22 22 17.52 22 12S17.52 2 11.99 2zM12 20c-4.42 0-8-3.58-8-8s3.58-8 8-8 8 3.58 8 8-3.58 8-8 8zm3.5-9c.83 0 1.5-.67 1.5-1.5S16.33 8 15.5 8 14 8.67 14 9.5s.67 1.5 1.5 1.5zm-7 0c.83 0 1.5-.67 1.5-1.5S9.33 8 8.5 8 7 8.67 7 9.5 7.67 11 8.5 11zm3.5 6.5c2.33 0 4.31-1.46 5.11-3.5H6.89c.8 2.04 2.78 3.5 5.11 3.5z"/></svg>
<div style="position:absolute;left:37px;top:462px;width:22px;height:22px;border-radius:50%;background:#ffeb3b;"></div>
<svg style="position:absolute;left:37px;top:462px;" width="22" height="22" viewBox="37 462 22 22"><path d="M45.9 470.6L48.5 468.6V476.8" fill="none" stroke="rgba(0,0,0,0.72)" stroke-width="1.05"/></svg>
<svg style="position:absolute;left:24px;top:521px;" width="24" height="24" viewBox="0 0 24 24"><path fill="rgba(0,0,0,0.54)" d="M20 4H4c-1.1 0-1.99.9-1.99 2L2 18c0 1.1.9 2 2 2h16c1.1 0 2-.9 2-2V6c0-1.1-.9-2-2-2zm0 4l-8 5-8-5V6l8 5 8-5v2z"/></svg>
<svg style="position:absolute;left:26px;top:573px;" width="20" height="20" viewBox="0 0 20 20"><rect x="0.8" y="0.8" width="18.4" height="18.4" rx="6" fill="#757575" transform="rotate(-14 10 10)"/><g stroke="#fff" stroke-width="2.4" stroke-linecap="round"><line x1="6.45" y1="6.23" x2="8.75" y2="14.71"/><line x1="11.25" y1="5.16" x2="13.81" y2="13.51"/><line x1="5.15" y1="8.99" x2="13.78" y2="6.47"/><line x1="6.48" y1="13.79" x2="14.85" y2="11.27"/></g><rect x="8.9" y="8.9" width="2.4" height="2.4" fill="#757575" transform="rotate(-16 10.1 10.1)"/></svg>
<svg style="position:absolute;left:26px;top:623px;" width="20" height="20" viewBox="0 8 496 496"><path fill="rgba(0,0,0,0.54)" d="M165.9 397.4c0 2-2.3 3.6-5.2 3.6-3.3.3-5.6-1.3-5.6-3.6 0-2 2.3-3.6 5.2-3.6 3-.3 5.6 1.3 5.6 3.6zm-31.1-4.5c-.7 2 1.3 4.3 4.3 4.9 2.6 1 5.6 0 6.2-2s-1.3-4.3-4.3-5c-2.6-.7-5.5.3-6.2 2.1zm44.2-1.7c-2.9.7-4.9 2.6-4.6 4.9.3 2 2.9 3.3 5.9 2.6 2.9-.7 4.9-2.6 4.6-4.6-.3-1.9-3-3.2-5.9-2.900zM244.8 8C106.1 8 0 113.3 0 252c0 110.9 69.8 205.8 169.5 239.2 12.8 2.3 17.3-5.6 17.3-12.1 0-6.2-.3-40.4-.3-61.4 0 0-70 15-84.7-29.8 0 0-11.4-29.1-27.8-36.6 0 0-22.9-15.7 1.6-15.4 0 0 24.9 2 38.6 25.8 21.9 38.6 58.6 27.5 72.9 20.9 2.3-16 8.8-27.1 16-33.7-55.9-6.2-112.3-14.3-112.3-110.5 0-27.5 7.6-41.3 23.6-58.9-2.6-6.5-11.1-33.3 2.6-67.9 20.9-6.5 69 27 69 27 20-5.6 41.5-8.5 62.8-8.5s42.8 2.9 62.8 8.5c0 0 48.1-33.6 69-27 13.7 34.7 5.2 61.4 2.6 67.9 16 17.7 25.8 31.5 25.8 58.9 0 96.5-58.9 104.2-114.8 110.5 9.2 7.9 17 22.9 17 46.4 0 33.7-.3 75.400-.3 83.6 0 6.5 4.6 14.4 17.3 12.1C428.2 457.8 496 362.9 496 252 496 113.3 383.5 8 244.8 8z"/></svg>
<div style="position:absolute;left:0px;top:0px;width:1502px;height:64px;background:#50ad50;box-shadow:0px 2px 4px -1px rgba(0,0,0,0.2),0px 4px 5px 0px rgba(0,0,0,0.14),0px 1px 10px 0px rgba(0,0,0,0.12);"></div>
<div style="position:absolute;left:247px;top:0px;width:1px;height:64px;background:#e0e0e0;"></div>
<svg style="position:absolute;left:14px;top:9px;" width="46" height="42" viewBox="0 0 1151 1051"><defs><linearGradient id="lg" x1="0" y1="0" x2="0" y2="1"><stop offset="0" stop-color="#2beda7"/><stop offset="1" stop-color="#0a96ff"/></linearGradient></defs><polygon points="50,230 126,270 126,805 50,765" fill="url(#lg)"/><polygon points="202,490 278,530 278,895 202,855" fill="url(#lg)"/><polygon points="357,570 433,610 433,995 357,955" fill="url(#lg)"/><polygon points="694,610 770,570 770,955 694,995" fill="url(#lg)"/><polygon points="847,530 923,490 923,855 847,895" fill="url(#lg)"/><polygon points="1000,270 1076,230 1076,765 1000,805" fill="url(#lg)"/><line x1="400" y1="75" x2="1075" y2="420" stroke="#2beda7" stroke-width="74"/><line x1="250" y1="170" x2="905" y2="520" stroke="#2beda7" stroke-width="74"/><line x1="95" y1="250" x2="770" y2="600" stroke="#2beda7" stroke-width="74"/><line x1="560" y1="120" x2="740" y2="75" stroke="#2beda7" stroke-width="74"/><line x1="700" y1="210" x2="890" y2="165" stroke="#2beda7" stroke-width="74"/><line x1="860" y1="300" x2="1040" y2="240" stroke="#2beda7" stroke-width="74"/><line x1="60" y1="405" x2="250" y2="335" stroke="#2beda7" stroke-width="74"/><line x1="205" y1="515" x2="420" y2="440" stroke="#2beda7" stroke-width="74"/><line x1="360" y1="595" x2="563" y2="520" stroke="#2beda7" stroke-width="74"/><line x1="438" y1="621" x2="701" y2="746" stroke="#2beda7" stroke-width="74"/><line x1="438" y1="768" x2="701" y2="896" stroke="#2beda7" stroke-width="74"/><line x1="433" y1="976" x2="563" y2="901" stroke="#2beda7" stroke-width="74"/><line x1="563" y1="901" x2="688" y2="976" stroke="#2beda7" stroke-width="74"/></svg>
<svg style="position:absolute;left:0px;top:0px;" width="200" height="64" viewBox="0 0 200 64"><g fill="none" stroke="#fff" stroke-width="2.5" stroke-linecap="round" stroke-linejoin="round"><path d="M66.9 22V37.9H75.7"/><path d="M83.7 22V37.9"/><path d="M93.2 37.9V22L106.8 37.9V22"/><path d="M115.9 22V37.9M127.2 22.2L117.2 31.2M120.2 28.8L127.5 37.9"/><path d="M146 22H135.5V37.9H146M135.5 29.8H145.2"/><path d="M154.3 37.9V22H160.8C164 22 165.8 24.2 165.8 26.3C165.8 28.6 164 30.6 160.8 30.6H154.3M160.6 30.6L165.8 37.9"/><path d="M174.1 22V37.9H179.6C184.8 37.9 188.1 34.4 188.1 29.95C188.1 25.5 184.8 22 179.6 22Z"/></g></svg>
<div class="t" style="left:272px;top:22.37px;font-size:20px;line-height:20px;color:#fff;letter-spacing:-0.25px;">Overview</div>
<svg style="position:absolute;left:208px;top:20px;" width="24" height="24" viewBox="0 0 24 24"><path fill="rgba(0,0,0,0.54)" d="M15.41 7.41L14 6l-6 6 6 6 1.41-1.41L10.83 12z"/></svg>
</body></html>
